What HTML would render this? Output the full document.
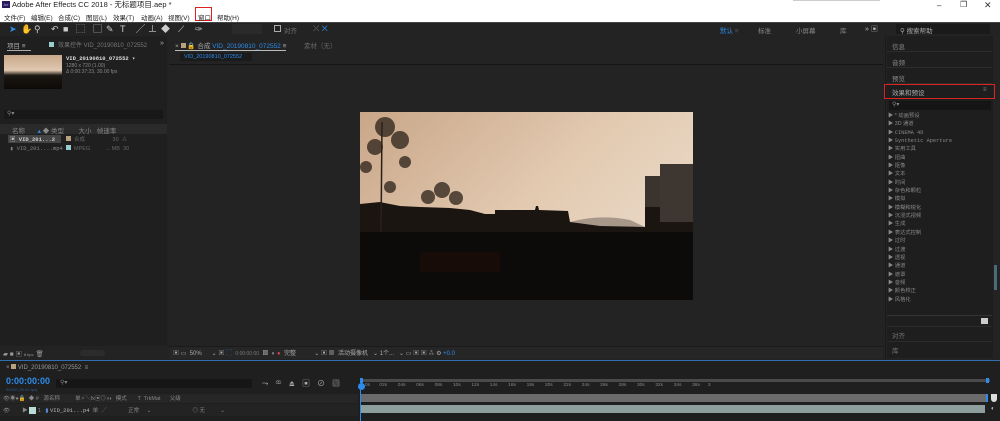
<!DOCTYPE html>
<html><head><meta charset="utf-8"><style>
*{margin:0;padding:0;box-sizing:border-box}
body{width:1000px;height:421px;overflow:hidden;background:#232323;font-family:"Liberation Sans","Noto Sans CJK SC",sans-serif;font-size:7px;color:#9a9a9a;position:relative}
.a{position:absolute}
.mono{font-family:"Liberation Mono","Noto Sans CJK SC",monospace}
.m{position:absolute;top:12px;font-size:6.5px;color:#222;white-space:nowrap}
.t{position:absolute;top:24px;font-size:9px;color:#ccc;line-height:10px}
</style></head><body>
<!-- title bar -->
<div class="a" style="left:0;top:0;width:1000px;height:22px;background:#fff"></div>
<div class="a" style="left:793px;top:0;width:87px;height:1px;background:#ccc"></div>
<div class="a" style="left:2px;top:1px;width:8px;height:7px;background:#2a1b5a;color:#a79cff;font-size:4px;line-height:7px;text-align:center">Ae</div>
<div class="a" style="left:12px;top:0;font-size:7.5px;color:#222;line-height:10px">Adobe After Effects CC 2018 - 无标题项目.aep *</div>
<div class="a" style="left:937px;top:1px;font-size:8px;color:#333">–</div>
<div class="a" style="left:960px;top:0;font-size:8px;color:#333">❐</div>
<div class="a" style="left:984px;top:0;font-size:9px;color:#333">✕</div>
<div class="m" style="left:4px">文件(F)</div>
<div class="m" style="left:31px">编辑(E)</div>
<div class="m" style="left:58px">合成(C)</div>
<div class="m" style="left:86px">图层(L)</div>
<div class="m" style="left:113px">效果(T)</div>
<div class="m" style="left:141px">动画(A)</div>
<div class="m" style="left:168px">视图(V)</div>
<div class="a" style="left:195px;top:7px;width:17px;height:14px;border:1.5px solid #d22"></div>
<div class="m" style="left:198px">窗口</div>
<div class="m" style="left:217px">帮助(H)</div>
<!-- toolbar -->
<div class="a" style="left:0;top:22px;width:1000px;height:14px;background:#232323;border-top:1px solid #444"></div>
<div class="t" style="left:9px;color:#2d8ceb">➤</div>
<div class="t" style="left:21px">✋</div>
<div class="t" style="left:34px">⚲</div>
<div class="t" style="left:51px">↶</div>
<div class="t" style="left:63px">■</div>
<div class="t" style="left:76px">⬚</div>
<div class="t" style="left:93px">▢</div>
<div class="t" style="left:106px">✎</div>
<div class="t" style="left:120px">T</div>
<div class="t" style="left:136px">╱</div>
<div class="t" style="left:148px">⊥</div>
<div class="t" style="left:161px">◆</div>
<div class="t" style="left:178px">⟋</div>
<div class="t" style="left:195px">✑</div>
<div class="a" style="left:232px;top:24px;width:30px;height:10px;background:#2a2a2a"></div>
<div class="a" style="left:274px;top:25px;width:7px;height:7px;border:1px solid #aaa"></div>
<div class="a" style="left:284px;top:25px;font-size:6.5px;color:#777">对齐</div>
<div class="a" style="left:313px;top:24px;font-size:8px;color:#888">⤫ <span style="color:#2d8ceb">✕</span></div>
<div class="a" style="left:720px;top:25px;font-size:6.5px;color:#2d8ceb">默认 <span style="color:#555">≡</span></div>
<div class="a" style="left:758px;top:25px;font-size:6.5px;color:#888">标准</div>
<div class="a" style="left:796px;top:25px;font-size:6.5px;color:#888">小屏幕</div>
<div class="a" style="left:840px;top:25px;font-size:6.5px;color:#888">库</div>
<div class="a" style="left:865px;top:24px;font-size:7px;color:#bbb">» ▣</div>
<div class="a" style="left:896px;top:24px;width:94px;height:10px;background:#1a1a1a"></div>
<div class="a" style="left:900px;top:25px;font-size:6.5px;color:#aaa">⚲ 搜索帮助</div>
<!-- left project panel -->
<div class="a" style="left:0;top:36px;width:167px;height:310px;background:#1f1f1f"></div>
<div class="a" style="left:7px;top:40px;font-size:6.5px;color:#aaa">项目 ≡</div>
<div class="a" style="left:7px;top:50px;width:24px;height:1px;background:#aaa"></div>
<div class="a" style="left:49px;top:40px;font-size:6px;color:#777"><span style="display:inline-block;width:5px;height:5px;background:#9cc;margin-right:4px"></span>效果控件 VID_20190810_072552</div>
<div class="a" style="left:160px;top:40px;font-size:7px;color:#aaa">»</div>
<div class="a" style="left:4px;top:55px;width:58px;height:34px;background:linear-gradient(180deg,#c8a88a,#e0c8b0 45%,#1b1712 60%,#0c0a08)"></div>
<div class="a mono" style="left:66px;top:55px;font-size:5.5px;color:#ddd;font-weight:bold">VID_20190810_072552 ▾</div>
<div class="a" style="left:66px;top:63px;font-size:5px;color:#888">1280 x 720 (1.00)</div>
<div class="a" style="left:66px;top:69px;font-size:5px;color:#888">Δ 0:00:37:23, 30.00 fps</div>
<div class="a" style="left:4px;top:110px;width:159px;height:9px;background:#181818"></div>
<div class="a" style="left:7px;top:110px;font-size:6px;color:#888">⚲▾</div>
<div class="a" style="left:0;top:124px;width:167px;height:10px;background:#2a2a2a"></div>
<div class="a" style="left:12px;top:125px;font-size:6.5px;color:#888;white-space:pre">名称       <span style="color:#2d8ceb">▴</span> ◆ 类型        大小   帧速率</div>
<div class="a" style="left:8px;top:135px;width:53px;height:8px;background:#444"></div>
<div class="a mono" style="left:10px;top:135px;font-size:5.5px;color:#ccc;font-weight:bold">▣ VID_201...2</div>
<div class="a" style="left:66px;top:135px;font-size:5.5px;color:#666;white-space:pre"><span style="display:inline-block;width:5px;height:5px;background:#b8a27e"></span>  合成                  30  ⁂</div>
<div class="a mono" style="left:10px;top:145px;font-size:5.5px;color:#888">▮ VID_201....mp4</div>
<div class="a" style="left:66px;top:145px;font-size:5.5px;color:#666;white-space:pre"><span style="display:inline-block;width:5px;height:5px;background:#9cc"></span>  MPEG          ... MB  30</div>
<div class="a" style="left:0;top:346px;width:167px;height:13px;background:#232323"></div>
<div class="a" style="left:3px;top:348px;font-size:6.5px;color:#999">▰ ■ ▣  <span style="font-size:4px">8 bpc</span>  🗑</div>
<div class="a" style="left:80px;top:350px;width:25px;height:6px;border-radius:3px;background:#2c2c2c"></div>
<!-- composition viewer -->
<div class="a" style="left:169px;top:36px;width:714px;height:323px;background:#232323"></div>
<div class="a" style="left:175px;top:40px;font-size:6.5px;color:#aaa;white-space:nowrap">× <span style="display:inline-block;width:5px;height:5px;background:#b8a27e"></span> 🔒 合成 <span style="color:#2d8ceb">VID_20190810_072552</span> ≡</div>
<div class="a" style="left:175px;top:50px;width:111px;height:1px;background:#bbb"></div>
<div class="a" style="left:304px;top:40px;font-size:6.5px;color:#666">素材（无）</div>
<div class="a" style="left:180px;top:53px;width:72px;height:8px;background:#1a1a1a;font-size:5.5px;color:#2d8ceb;line-height:8px;padding-left:4px">VID_20190810_072552</div>
<div class="a" style="left:169px;top:64px;width:714px;height:1px;background:#151515"></div>
<svg class="a" style="left:360px;top:112px" width="333" height="188" viewBox="0 0 333 188">
<defs><linearGradient id="sky" x1="0" y1="0" x2="1" y2="0.6"><stop offset="0" stop-color="#c9a688"/><stop offset="0.6" stop-color="#e3cbb2"/><stop offset="1" stop-color="#ead9c8"/></linearGradient>
<radialGradient id="sun" cx="0.33" cy="0.7" r="0.08"><stop offset="0" stop-color="#fff4dc"/><stop offset="1" stop-color="#fff4dc" stop-opacity="0"/></radialGradient></defs>
<rect width="333" height="188" fill="url(#sky)"/>
<rect width="333" height="188" fill="url(#sun)"/>
<path d="M210 110 Q240 102 270 108 L285 115 L210 118Z" fill="#a8988a"/>
<path d="M0 92 L20 90 L40 94 L60 95 L90 96 L110 98 L125 102 L135 102 L135 98 L175 98 L176 94 L178 94 L179 98 L208 99 L210 110 L240 114 L285 115 L285 64 L300 64 L300 52 L333 52 L333 188 L0 188Z" fill="#1a1510"/>
<path d="M300 52 L333 52 L333 110 L300 110Z" fill="#3e3630"/>
<path d="M285 64 L300 64 L300 95 L285 95Z" fill="#3b342e"/>
<g fill="#2a2018" opacity="0.75">
<circle cx="25" cy="15" r="10"/><circle cx="40" cy="28" r="9"/><circle cx="15" cy="35" r="8"/><circle cx="45" cy="50" r="6"/><circle cx="6" cy="55" r="6"/><circle cx="30" cy="75" r="6"/>
<circle cx="68" cy="85" r="7"/><circle cx="82" cy="78" r="8"/><circle cx="96" cy="86" r="7"/>
</g>
<path d="M22 10 L21 125" stroke="#2a2018" stroke-width="1.5"/>
<rect x="0" y="120" width="333" height="68" fill="#0d0b09"/>
<rect x="60" y="140" width="80" height="20" fill="#2a0f0a" opacity="0.4"/>
</svg>
<!-- viewer bottom bar -->
<div class="a" style="left:169px;top:346px;width:714px;height:13px;background:#262626;border-top:1px solid #1a1a1a"></div>
<div class="a" style="left:173px;top:348px;font-size:6px;color:#aaa;white-space:pre">▣ ▭  50%      ⌄ ▣ <span style="color:#2d8ceb">⬚</span>  <span style="font-size:5px;color:#777">0:00:00:00</span>  ▩  ◐ <span style="color:#c44">●</span>  完整           ⌄ ▣ ▦  活动摄像机   ⌄ 1个...   ⌄ ▭ ▣ ▣ ⁂ ⚙ <span style="color:#2d8ceb">+0.0</span></div>
<!-- right panel -->
<div class="a" style="left:885px;top:36px;width:115px;height:323px;background:#232323;border-left:1px solid #1a1a1a"></div>
<div class="a" style="left:887px;top:36px;width:106px;height:322px;background:#1e1e1e"></div>
<div class="a" style="left:892px;top:40px;font-size:6.5px;color:#888;line-height:16px">信息<br>音频<br>预览</div>
<div class="a" style="left:887px;top:51px;width:105px;height:1px;background:#2c2c2c"></div>
<div class="a" style="left:887px;top:67px;width:105px;height:1px;background:#2c2c2c"></div>
<div class="a" style="left:887px;top:83px;width:105px;height:1px;background:#2c2c2c"></div>
<div class="a" style="left:884px;top:84px;width:111px;height:15px;border:1.5px solid #d22"></div>
<div class="a" style="left:892px;top:87px;font-size:6.5px;color:#aaa">效果和预设</div>
<div class="a" style="left:983px;top:87px;font-size:6px;color:#888">≡</div>
<div class="a" style="left:889px;top:101px;width:102px;height:9px;background:#151515;font-size:6px;color:#888;padding-left:3px">⚲▾</div>
<div class="a" style="left:888px;top:112px;font-size:5.3px;color:#888;line-height:8.35px;white-space:pre">▶ * 动画预设
▶ 3D 通道
▶ <span class="mono">CINEMA 4D</span>
▶ <span class="mono">Synthetic Aperture</span>
▶ 实用工具
▶ 扭曲
▶ 抠像
▶ 文本
▶ 时间
▶ 杂色和颗粒
▶ 模拟
▶ 模糊和锐化
▶ 沉浸式视频
▶ 生成
▶ 表达式控制
▶ 过时
▶ 过渡
▶ 透视
▶ 通道
▶ 遮罩
▶ 音频
▶ 颜色校正
▶ 风格化</div>
<div class="a" style="left:994px;top:265px;width:3px;height:25px;background:#4a6a7a"></div>
<div class="a" style="left:887px;top:315px;width:105px;height:1px;background:#333"></div>
<div class="a" style="left:981px;top:318px;width:7px;height:6px;background:#ccc"></div>
<div class="a" style="left:887px;top:326px;width:105px;height:1px;background:#2c2c2c"></div>
<div class="a" style="left:892px;top:330px;font-size:6.5px;color:#777">对齐</div>
<div class="a" style="left:887px;top:341px;width:105px;height:1px;background:#2c2c2c"></div>
<div class="a" style="left:892px;top:345px;font-size:6.5px;color:#777">库</div>
<!-- timeline -->
<div class="a" style="left:0;top:360px;width:1000px;height:61px;background:#1f1f1f;border-top:1px solid #2d6db0"></div>
<div class="a" style="left:6px;top:364px;font-size:6px;color:#999;white-space:pre">× <span style="display:inline-block;width:5px;height:5px;background:#b8a27e"></span> VID_20190810_072552  ≡</div>
<div class="a" style="left:6px;top:376px;font-size:9px;color:#2d8ceb;font-weight:bold">0:00:00:00</div>
<div class="a" style="left:6px;top:387px;font-size:4px;color:#2d5a8a">00000 (30.00 fps)</div>
<div class="a" style="left:56px;top:379px;width:196px;height:9px;background:#161616;font-size:6px;color:#888;padding-left:4px">⚲▾</div>
<div class="a" style="left:262px;top:378px;font-size:8px;color:#aaa;letter-spacing:7px">⤳⚭⏏▣⊘▧</div>
<div class="a" style="left:0;top:394px;width:358px;height:9px;background:#262626"></div>
<div class="a" style="left:3px;top:394px;font-size:5.5px;color:#888;white-space:pre">👁◉●🔒  ◆ #   源名称          单✧╲fx▣◎◑◐  模式       T  TrkMat      父级</div>
<div class="a" style="left:0;top:404px;width:358px;height:12px;background:#232323"></div>
<div class="a" style="left:3px;top:406px;font-size:5.5px;color:#888;white-space:pre">👁        ▶ <span style="display:inline-block;width:7px;height:7px;background:#b9dcd6;vertical-align:middle"></span> 1   <span style="color:#5a8ade">▮</span> <span class="mono" style="color:#bbb">VID_201...p4</span>  单  ╱              正常     ⌄  <span style="display:inline-block;width:35px"></span>  ◎ 无          ⌄</div>
<!-- ruler -->
<div class="a" style="left:360px;top:379px;width:630px;height:3px;background:#4a4a4a"></div>
<div class="a" style="left:360px;top:378px;width:3px;height:5px;background:#2d8ceb"></div>
<div class="a" style="left:986px;top:378px;width:3px;height:5px;background:#2d8ceb"></div>
<div class="a" style="left:365px;top:383px;font-size:4.8px;color:#888;white-space:pre;word-spacing:0">0s       02s        04s        06s        08s        10s        12s        14s        16s        18s        20s        22s        24s        26s        28s        30s        32s        34s        36s      3</div>
<div class="a" style="left:358px;top:383px;width:7px;height:7px;border-radius:50%;background:#2d8ceb"></div>
<div class="a" style="left:360px;top:390px;width:1px;height:31px;background:#2d8ceb"></div>
<div class="a" style="left:361px;top:394px;width:625px;height:8px;background:#6b6b6b"></div>
<div class="a" style="left:986px;top:394px;width:2px;height:8px;background:#2d8ceb"></div>
<div class="a" style="left:991px;top:394px;width:6px;height:8px;background:#ddd;border-radius:0 0 3px 3px"></div>
<div class="a" style="left:361px;top:405px;width:624px;height:8px;background:#8d9e9c"></div>
<div class="a" style="left:991px;top:406px;font-size:6px;color:#ccc">◐</div>
</body></html>
